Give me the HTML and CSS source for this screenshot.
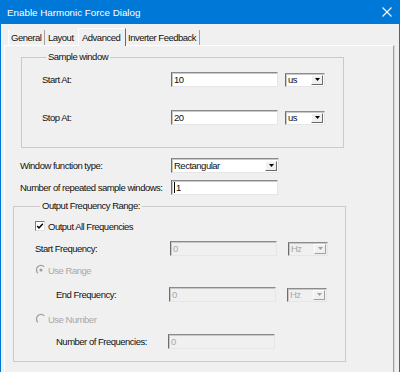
FILE: index.html
```html
<!DOCTYPE html>
<html lang="en">
<head>
    <meta charset="UTF-8">
    <title>Enable Harmonic Force Dialog</title>
    <link rel="stylesheet" href="styles.css">
</head>
<body>
    <div class="window">
        <div class="titlebar">
            <span class="title">Enable Harmonic Force Dialog</span>
            <svg class="close" width="10" height="10" viewBox="0 0 10 10">
                <path d="M0.5 0.5 L9.5 9.5 M9.5 0.5 L0.5 9.5" stroke="#fff" stroke-width="1.1" fill="none"/>
            </svg>
        </div>
        <div class="tabs">
            <div class="tab tab-general">General</div>
            <div class="tab tab-layout">Layout</div>
            <div class="tab tab-advanced">Advanced</div>
            <div class="tab tab-inverter">Inverter Feedback</div>
        </div>
        <div class="panel">
            <fieldset class="group sample">
                <legend>Sample window</legend>
                <div class="row first">
                    <span class="lbl w129">Start At:</span>
                    <div class="edit">10</div>
                    <div class="combo unit gap7"><span>us</span><span class="drop"><svg width="5" height="3" viewBox="0 0 5 3"><path d="M0 0 H5 L2.5 3 Z" fill="#000"/></svg></span></div>
                </div>
                <div class="row second">
                    <span class="lbl w129">Stop At:</span>
                    <div class="edit">20</div>
                    <div class="combo unit gap7"><span>us</span><span class="drop"><svg width="5" height="3" viewBox="0 0 5 3"><path d="M0 0 H5 L2.5 3 Z" fill="#000"/></svg></span></div>
                </div>
            </fieldset>

            <div class="row loose func">
                <span class="lbl w151">Window function type:</span>
                <div class="combo wide"><span>Rectangular</span><span class="drop"><svg width="5" height="3" viewBox="0 0 5 3"><path d="M0 0 H5 L2.5 3 Z" fill="#000"/></svg></span></div>
            </div>
            <div class="row loose count">
                <span class="lbl w151">Number of repeated sample windows:</span>
                <div class="edit"><span class="caret"></span>1</div>
            </div>

            <fieldset class="group output">
                <legend>Output Frequency Range:</legend>
                <div class="row small check-row">
                    <span class="check"><svg width="8" height="8" viewBox="0 0 8 8"><path d="M1.2 4 L3 6 L6.8 1.8" stroke="#000" stroke-width="1.5" fill="none"/></svg></span>
                    <span>Output All Frequencies</span>
                </div>
                <div class="row start-row">
                    <span class="lbl w135">Start Frequency:</span>
                    <div class="edit off">0</div>
                    <div class="combo unit off gap11"><span>Hz</span><span class="drop"><svg width="5" height="3" viewBox="0 0 5 3"><path d="M0 0 H5 L2.5 3 Z" fill="#a0a0a0"/></svg></span></div>
                </div>
                <div class="row small radio-row range-row">
                    <svg class="radio" width="12" height="12" viewBox="0 0 12 12">
                        <path d="M2.8 9.2 A4.5 4.5 0 0 1 9.2 2.8" stroke="#a0a0a0" stroke-width="1.3" fill="none"/>
                        <circle cx="6" cy="6" r="1.6" fill="#a0a0a0"/>
                    </svg>
                    <span class="muted">Use Range</span>
                </div>
                <div class="row indent end-row">
                    <span class="lbl w113">End Frequency:</span>
                    <div class="edit off">0</div>
                    <div class="combo unit off gap11"><span>Hz</span><span class="drop"><svg width="5" height="3" viewBox="0 0 5 3"><path d="M0 0 H5 L2.5 3 Z" fill="#a0a0a0"/></svg></span></div>
                </div>
                <div class="row small radio-row number-row">
                    <svg class="radio" width="12" height="12" viewBox="0 0 12 12">
                        <path d="M2.8 9.2 A4.5 4.5 0 0 1 9.2 2.8" stroke="#a0a0a0" stroke-width="1.3" fill="none"/>
                    </svg>
                    <span class="muted">Use Number</span>
                </div>
                <div class="row indent nfreq-row">
                    <span class="lbl w112">Number of Frequencies:</span>
                    <div class="edit off">0</div>
                </div>
            </fieldset>
        </div>
    </div>
</body>
</html>
```

FILE: styles.css
```css
body {
    margin: 0;
    background: #f0f0f0;
    font-family: "Liberation Sans", Arial, sans-serif;
    font-size: 9.5px;
    letter-spacing: -0.5px;
    color: #111;
}
.window {
    width: 400px;
    height: 372px;
    box-sizing: border-box;
    border-left: 1px solid #0078d7;
    border-right: 1px solid #0078d7;
    background: #f0f0f0;
    overflow: hidden;
}
.titlebar {
    height: 24px;
    background: #0078d7;
    color: #fff;
    display: flex;
    align-items: center;
    justify-content: space-between;
    padding: 0 7px 0 6px;
}
.title {
    font-size: 9.8px;
    letter-spacing: 0;
}

/* tabs */
.tabs {
    display: flex;
    align-items: flex-end;
    height: 17px;
    margin-top: 4px;
    padding-left: 7px;
}
.tab {
    box-sizing: border-box;
    height: 15px;
    line-height: 15px;
    padding-left: 2px;
    border-right: 1px solid #a0a0a0;
    white-space: nowrap;
}
.tab-general { width: 37px; border-left: 1px solid #fff; }
.tab-layout { width: 33px; padding-left: 3px; border-right: none; }
.tab-advanced {
    position: relative;
    z-index: 1;
    width: 48px;
    height: 18px;
    line-height: 17px;
    margin-bottom: -1px;
    padding-left: 3px;
    background: #f0f0f0;
    border-top: 1px solid #fff;
    border-left: 1px solid #fff;
    border-right: 1px solid #696969;
}
.tab-inverter { width: 74px; }

.panel {
    margin-left: 3px;
    width: 390px;
    height: 400px;
    box-sizing: border-box;
    border-top: 1px solid #fff;
    border-left: 1px solid #fff;
    border-right: 1px solid #a0a0a0;
    box-shadow: 1px 0 0 #d8d8d8;
}

/* group boxes */
.group {
    min-width: 0;
    box-sizing: border-box;
    margin: 5px 0 0 16px;
    padding: 0 0 22px 20px;
    border: 1px solid #cacaca;
    width: 323px;
}
.group legend {
    padding: 0 2px;
    margin-left: 4px;
    line-height: 12px;
}
.group.output {
    margin: 5px 0 0 8px;
    width: 333px;
    padding: 0 0 12px 21px;
}
.group.output legend { margin-left: 5px; }

/* rows */
.row {
    display: flex;
    align-items: center;
    height: 15px;
    white-space: nowrap;
}
.row.small { height: 12px; }
.sample .first { margin-top: 9px; }
.sample .second { margin-top: 23px; }
.loose { margin-left: 15px; }
.func { margin-top: 10px; }
.count { margin-top: 7px; }
.check-row { margin-top: 8px; }
.start-row { margin-top: 9px; }
.range-row { margin-top: 8px; }
.end-row { margin-top: 11px; }
.number-row { margin-top: 11px; }
.nfreq-row { margin-top: 9px; }
.indent { padding-left: 21px; }

.lbl { flex: none; }
.w112 { width: 112px; }
.w113 { width: 113px; }
.w129 { width: 129px; }
.w135 { width: 135px; }
.w151 { width: 151px; }

/* controls */
.edit, .combo {
    box-sizing: border-box;
    height: 15px;
    background: #fff;
    border: 1px solid;
    border-color: #8c8c8c #e6e6e6 #e6e6e6 #6e6e6e;
    box-shadow: inset 1px 1px 0 #c8c8c8;
    line-height: 13px;
    padding-left: 2px;
}
.edit {
    width: 107px;
    display: flex;
    align-items: center;
}
.caret {
    display: inline-block;
    width: 1px;
    height: 11px;
    background: #000;
    margin-right: 1px;
}
.combo {
    display: flex;
    align-items: center;
    justify-content: space-between;
    padding-right: 1px;
}
.combo.unit { width: 40px; height: 14px; }
.combo.wide { width: 108px; }
.gap7 { margin-left: 7px; }
.gap11 { margin-left: 11px; }
.drop {
    box-sizing: border-box;
    width: 12px;
    height: 10px;
    background: #f0f0f0;
    border: 1px solid;
    border-color: #fff #696969 #696969 #fff;
    display: flex;
    align-items: center;
    justify-content: center;
}
.off {
    background: #f0f0f0;
    color: #a8a8a8;
}
.off .drop { border-color: #fff #a0a0a0 #a0a0a0 #fff; }

.check {
    box-sizing: border-box;
    width: 10px;
    height: 10px;
    margin-right: 3px;
    background: #fff;
    border: 1px solid;
    border-color: #7a7a7a #e0e0e0 #e0e0e0 #7a7a7a;
    display: flex;
    align-items: center;
    justify-content: center;
}
.radio { margin-right: 1px; }
.muted { color: #a8a8a8; }
```
